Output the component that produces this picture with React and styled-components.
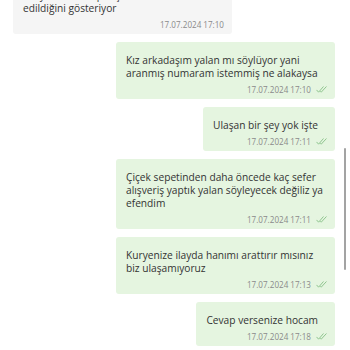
import styled, { createGlobalStyle } from "styled-components";

const GlobalStyle = createGlobalStyle`
  html, body {
    margin: 0;
    padding: 0;
    background: #ffffff;
  }
  body {
    font-family: "Open Sans", "Noto Sans", sans-serif;
  }
`;

const Viewport = styled.div`
  position: relative;
  height: 350px;
  overflow: hidden;
  display: flex;
  flex-direction: column;
  justify-content: flex-end;
  gap: 8px;
  padding: 0 15px 4px 13px;
  box-sizing: border-box;
`;

const Bubble = styled.div`
  align-self: ${(p) => (p.$mine ? "flex-end" : "flex-start")};
  width: ${(p) => (p.$full ? "220px" : "auto")};
  max-width: 219px;
  box-sizing: border-box;
  padding: 12px 10px 4px 10px;
  border-radius: 3px;
  background: ${(p) => (p.$mine ? "#e5f5e0" : "#f5f5f5")};
  color: #333333;
  flex-shrink: 0;
`;

/* the spacer gives short bubbles some room on the right,
   but gives way first when a long message has to wrap */
const TextRow = styled.div`
  display: flex;
  &::after {
    content: "";
    width: 7px;
    flex-shrink: 1000;
    min-width: 0;
  }
`;

const Text = styled.div`
  flex: 0 1 auto;
  font-size: 10.2px;
  line-height: 13px;
  white-space: pre-line;
`;

const Meta = styled.div`
  display: flex;
  justify-content: flex-end;
  align-items: center;
  gap: 5px;
  margin: 4px -2px 0 0;
  font-size: 8.1px;
  line-height: 11px;
  color: #8a8a8a;
`;

const Ticks = styled.svg`
  width: 11px;
  height: 7px;
  flex-shrink: 0;
`;

const ScrollThumb = styled.div`
  position: absolute;
  left: 344px;
  top: 148px;
  width: 2px;
  height: 122px;
  border-radius: 1px;
  background: #a3a3a3;
`;

const messages = [
  {
    mine: false,
    full: true,
    text: "Kurye sistemi siparişin teslim\nedildiğini gösteriyor",
    time: "17.07.2024 17:10",
  },
  {
    mine: true,
    text: "Kız arkadaşım yalan mı söylüyor yani aranmış numaram istemmiş ne alakaysa",
    time: "17.07.2024 17:10",
  },
  { mine: true, text: "Ulaşan bir şey yok işte", time: "17.07.2024 17:11" },
  {
    mine: true,
    text: "Çiçek sepetinden daha öncede kaç sefer alışveriş yaptık yalan söyleyecek değiliz ya efendim",
    time: "17.07.2024 17:11",
  },
  {
    mine: true,
    text: "Kuryenize ilayda hanımı arattırır mısınız biz ulaşamıyoruz",
    time: "17.07.2024 17:13",
  },
  { mine: true, text: "Cevap versenize hocam", time: "17.07.2024 17:18" },
];

const DoubleTick = () => (
  <Ticks viewBox="0 0 11 7" fill="none" stroke="#86bf86" strokeWidth="0.9" strokeLinecap="round">
    <path d="M0.8 4.2 L2.6 6.2 L7.2 0.8" />
    <path d="M4.6 5.6 L5.2 6.2 L10.2 0.8" />
  </Ticks>
);

const App = () => (
  <>
    <GlobalStyle />
    <Viewport>
      {messages.map((m, i) => (
        <Bubble key={i} $mine={m.mine} $full={m.full}>
          <TextRow>
            <Text>{m.text}</Text>
          </TextRow>
          <Meta>
            <span>{m.time}</span>
            {m.mine && <DoubleTick />}
          </Meta>
        </Bubble>
      ))}
      <ScrollThumb />
    </Viewport>
  </>
);

export default App;
